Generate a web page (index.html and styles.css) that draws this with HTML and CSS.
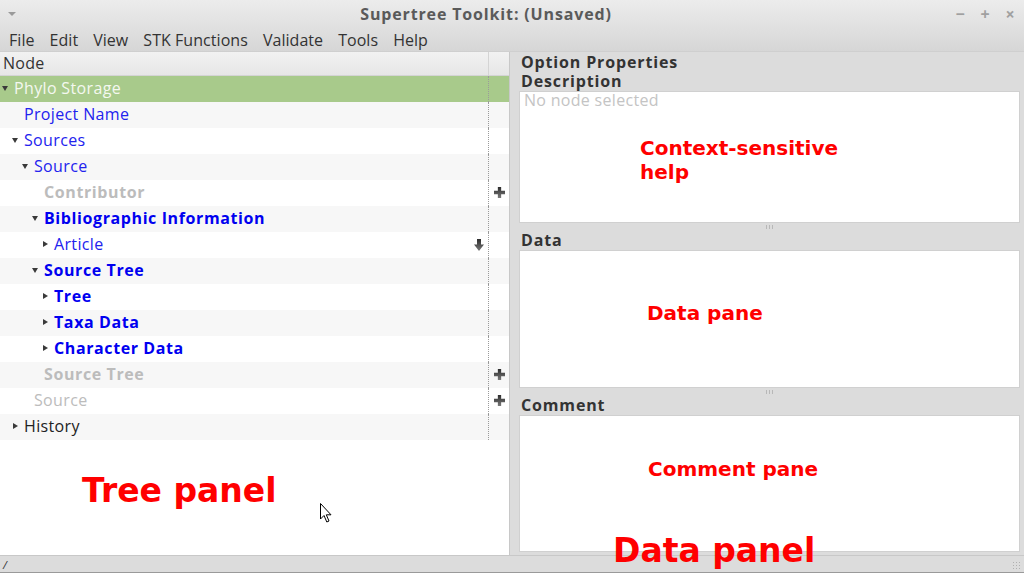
FILE: index.html
```html
<!DOCTYPE html>
<html>
<head>
<meta charset="utf-8">
<link rel="stylesheet" href="styles.css">
</head>
<body>
<div class="window">
  <div class="titlebar">
    <span class="wm-menu"></span>
    <span class="title">Supertree Toolkit: (Unsaved)</span>
    <span class="wm-buttons"><span class="wm-btn">−</span><span class="wm-btn">+</span><span class="wm-btn">×</span></span>
  </div>
  <div class="menubar">
    <span class="menu-item">File</span>
    <span class="menu-item">Edit</span>
    <span class="menu-item">View</span>
    <span class="menu-item">STK Functions</span>
    <span class="menu-item">Validate</span>
    <span class="menu-item">Tools</span>
    <span class="menu-item">Help</span>
  </div>
  <div class="main">
    <div class="tree">
      <div class="tree-header">
        <div class="col-node">Node</div>
        <div class="col-act"></div>
      </div>
      <div class="rows">
        <div class="row selected"><div class="cell lvl0"><span class="exp down"></span><span class="lbl plain-light">Phylo Storage</span></div><div class="act"></div></div>
        <div class="row odd"><div class="cell lvl1"><span class="exp"></span><span class="lbl blue">Project Name</span></div><div class="act"></div></div>
        <div class="row"><div class="cell lvl1"><span class="exp down"></span><span class="lbl blue">Sources</span></div><div class="act"></div></div>
        <div class="row odd"><div class="cell lvl2"><span class="exp down"></span><span class="lbl blue">Source</span></div><div class="act"></div></div>
        <div class="row"><div class="cell lvl3"><span class="exp"></span><span class="lbl grey bold">Contributor</span></div><div class="act"><span class="plus"></span></div></div>
        <div class="row odd"><div class="cell lvl3"><span class="exp down"></span><span class="lbl blue bold">Bibliographic Information</span></div><div class="act"></div></div>
        <div class="row"><div class="cell lvl4"><span class="exp right"></span><span class="lbl blue">Article</span><span class="darrow"></span></div><div class="act"></div></div>
        <div class="row odd"><div class="cell lvl3"><span class="exp down"></span><span class="lbl blue bold">Source Tree</span></div><div class="act"></div></div>
        <div class="row"><div class="cell lvl4"><span class="exp right"></span><span class="lbl blue bold">Tree</span></div><div class="act"></div></div>
        <div class="row odd"><div class="cell lvl4"><span class="exp right"></span><span class="lbl blue bold">Taxa Data</span></div><div class="act"></div></div>
        <div class="row"><div class="cell lvl4"><span class="exp right"></span><span class="lbl blue bold">Character Data</span></div><div class="act"></div></div>
        <div class="row odd"><div class="cell lvl3"><span class="exp"></span><span class="lbl grey bold">Source Tree</span></div><div class="act"><span class="plus"></span></div></div>
        <div class="row"><div class="cell lvl2"><span class="exp"></span><span class="lbl grey">Source</span></div><div class="act"><span class="plus"></span></div></div>
        <div class="row odd"><div class="cell lvl1"><span class="exp right"></span><span class="lbl dark">History</span></div><div class="act"></div></div>
      </div>
    </div>
    <div class="splitter"></div>
    <div class="props">
      <div class="heading first">Option Properties</div>
      <div class="heading second">Description</div>
      <div class="box box-desc"><span class="placeholder">No node selected</span></div>
      <div class="handle"><span class="grip"></span></div>
      <div class="heading">Data</div>
      <div class="box box-data"></div>
      <div class="handle"><span class="grip"></span></div>
      <div class="heading">Comment</div>
      <div class="box box-comment"></div>
    </div>
  </div>
  <div class="statusbar"><span class="status-text">/</span><span class="resize-grip"></span></div>

  <div class="note note-help">Context-sensitive<br>help</div>
  <div class="note note-data">Data pane</div>
  <div class="note note-comment">Comment pane</div>
  <div class="note big note-tree">Tree panel</div>
  <div class="note big note-datapanel">Data panel</div>
  <svg class="cursor" width="13" height="21" viewBox="0 0 13 21"><path d="M0.5 0.5 L0.5 16 L4 12.5 L6.8 19 L9 18 L6.3 11.8 L11 11.8 Z" fill="#fff" stroke="#000" stroke-width="1"/></svg>
</div>
</body>
</html>
```
FILE: styles.css
```css
* { box-sizing: border-box; }
html, body { margin: 0; padding: 0; }
body {
  width: 1024px;
  height: 573px;
  overflow: hidden;
  font-family: "Open Sans", "DejaVu Sans", sans-serif;
  font-size: 16px;
  color: #333;
}
.window {
  position: relative;
  width: 1024px;
  height: 573px;
  display: flex;
  flex-direction: column;
  background: #dcdcdc;
}
.titlebar {
  height: 28px;
  display: flex;
  align-items: center;
  justify-content: center;
  position: relative;
  background: linear-gradient(#ececec, #e0e0e0);
}
.wm-menu {
  position: absolute;
  left: 8px;
  top: 12px;
  width: 0; height: 0;
  border-left: 4px solid transparent;
  border-right: 4px solid transparent;
  border-top: 4px solid #9a9a9a;
}
.title {
  font-weight: 700;
  font-size: 16px;
  letter-spacing: 0.85px;
  color: #5a5a5a;
  margin-left: -52px;
}
.wm-buttons {
  position: absolute;
  right: 6px;
  top: 3px;
  display: flex;
  gap: 9px;
}
.wm-btn {
  width: 16px;
  text-align: center;
  color: #a0a0a0;
  font-weight: 700;
  font-size: 16px;
  line-height: 22px;
}
.menubar {
  height: 24px;
  display: flex;
  align-items: center;
  padding-left: 9px;
  gap: 15px;
  background: linear-gradient(#e0e0e0, #d6d6d6);
  border-bottom: 1px solid #cfcfcf;
}
.menu-item {
  font-size: 16px;
  color: #333;
  letter-spacing: 0.05px;
}
.main {
  height: 503px;
  display: flex;
}
.tree {
  width: 510px;
  background: #fff;
  display: flex;
  flex-direction: column;
  border-right: 1px solid #c8c8c8;
}
.tree-header {
  height: 24px;
  display: flex;
  background: linear-gradient(#f2f2f2, #e6e6e6);
  border-bottom: 1px solid #d4d4d4;
}
.col-node {
  width: 489px;
  padding-left: 3px;
  line-height: 22px;
  font-size: 16px;
  letter-spacing: 0.3px;
  color: #333;
  border-right: 1px solid #d4d4d4;
}
.col-act { flex: 1; }
.rows { display: flex; flex-direction: column; }
.row {
  height: 26px;
  display: flex;
  background: #fff;
}
.row.odd { background: #f7f7f7; }
.row.selected { background: #a8ca8b; }
.cell {
  width: 489px;
  display: flex;
  align-items: center;
  border-right: 1px dotted #9a9a9a;
  position: relative;
}
.lvl0 { padding-left: 0; }
.lvl1 { padding-left: 10px; }
.lvl2 { padding-left: 20px; }
.lvl3 { padding-left: 30px; }
.lvl4 { padding-left: 40px; }
.exp {
  width: 14px;
  height: 26px;
  position: relative;
  flex: none;
}
.exp.down::before {
  content: "";
  position: absolute;
  left: 2px; top: 10px;
  border-left: 3px solid transparent;
  border-right: 3px solid transparent;
  border-top: 5px solid #3a3a3a;
}
.exp.right::before {
  content: "";
  position: absolute;
  left: 3px; top: 9px;
  border-top: 3px solid transparent;
  border-bottom: 3px solid transparent;
  border-left: 5px solid #3a3a3a;
}
.lbl {
  font-size: 16px;
  line-height: 24px;
  margin-bottom: 2px;
  letter-spacing: 0.35px;
  white-space: nowrap;
}
.lbl.bold { font-weight: 700; letter-spacing: 0.6px; }
.blue { color: #2222ee; }
.blue.bold { color: #0000f0; }
.grey { color: #bcbcbc; }
.dark { color: #222; }
.plain-light { color: #f4f8f0; }
.act {
  flex: 1;
  position: relative;
}
.plus {
  position: absolute;
  left: 5px; top: 7px;
  width: 11px; height: 11px;
  background: linear-gradient(#2c2c2c, #7a7a7a);
  clip-path: polygon(35% 0, 65% 0, 65% 35%, 100% 35%, 100% 65%, 65% 65%, 65% 100%, 35% 100%, 35% 65%, 0 65%, 0 35%, 35% 35%);
}
.darrow {
  position: absolute;
  right: 4px; top: 7px;
  width: 10px; height: 12px;
  background: linear-gradient(#2c2c2c, #7a7a7a);
  clip-path: polygon(30% 0, 70% 0, 70% 45%, 100% 45%, 50% 100%, 0 45%, 30% 45%);
}
.splitter {
  width: 8px;
  background: #dcdcdc;
  position: relative;
}
.props {
  flex: 1;
  display: flex;
  flex-direction: column;
  padding: 0 4px 3px 1px;
}
.heading {
  height: 18px;
  line-height: 17px;
  font-weight: 700;
  font-size: 16px;
  letter-spacing: 0.85px;
  color: #333;
  padding-left: 2px;
  white-space: nowrap;
}
.heading.first { height: 20px; line-height: 21px; }
.heading.second { height: 19px; line-height: 19px; }
.box {
  background: #fff;
  border: 1px solid #d0d0d0;
}
.box-desc { height: 132px; padding: 0 4px; }
.box-data { height: 138px; }
.box-comment { flex: 1; }
.placeholder {
  color: #c4c4c4;
  font-size: 16px;
  letter-spacing: 0.3px;
  line-height: 17px;
  display: block;
}
.handle {
  height: 9px;
  display: flex;
  justify-content: center;
}
.grip {
  width: 7px;
  height: 4px;
  margin-top: 2px;
  background: repeating-linear-gradient(90deg, #b8b8b8 0 1px, transparent 1px 3px);
}
.statusbar {
  height: 18px;
  background: #dcdcdc;
  border-top: 1px solid #c8c8c8;
  border-bottom: 1px solid #9a9a9a;
  position: relative;
  display: flex;
  align-items: center;
}
.status-text {
  font-size: 11px;
  font-style: italic;
  color: #333;
  padding-left: 3px;
}
.resize-grip {
  position: absolute;
  right: 2px; bottom: 1px;
  width: 10px; height: 10px;
  background: radial-gradient(circle, #b0b0b0 0.6px, transparent 0.8px) 0 0 / 3px 3px;
}
.note {
  position: absolute;
  font-family: "DejaVu Sans", sans-serif;
  font-weight: 700;
  color: #ff0000;
  font-size: 20px;
  line-height: 24px;
  white-space: nowrap;
}
.note-help { left: 640px; top: 136px; }
.note-data { left: 647px; top: 301px; }
.note-comment { left: 648px; top: 457px; }
.big { font-size: 33px; line-height: 38px; }
.note-tree { left: 82px; top: 472px; }
.note-datapanel { left: 613px; top: 532px; }
.cursor { position: absolute; left: 320px; top: 503px; }
```
